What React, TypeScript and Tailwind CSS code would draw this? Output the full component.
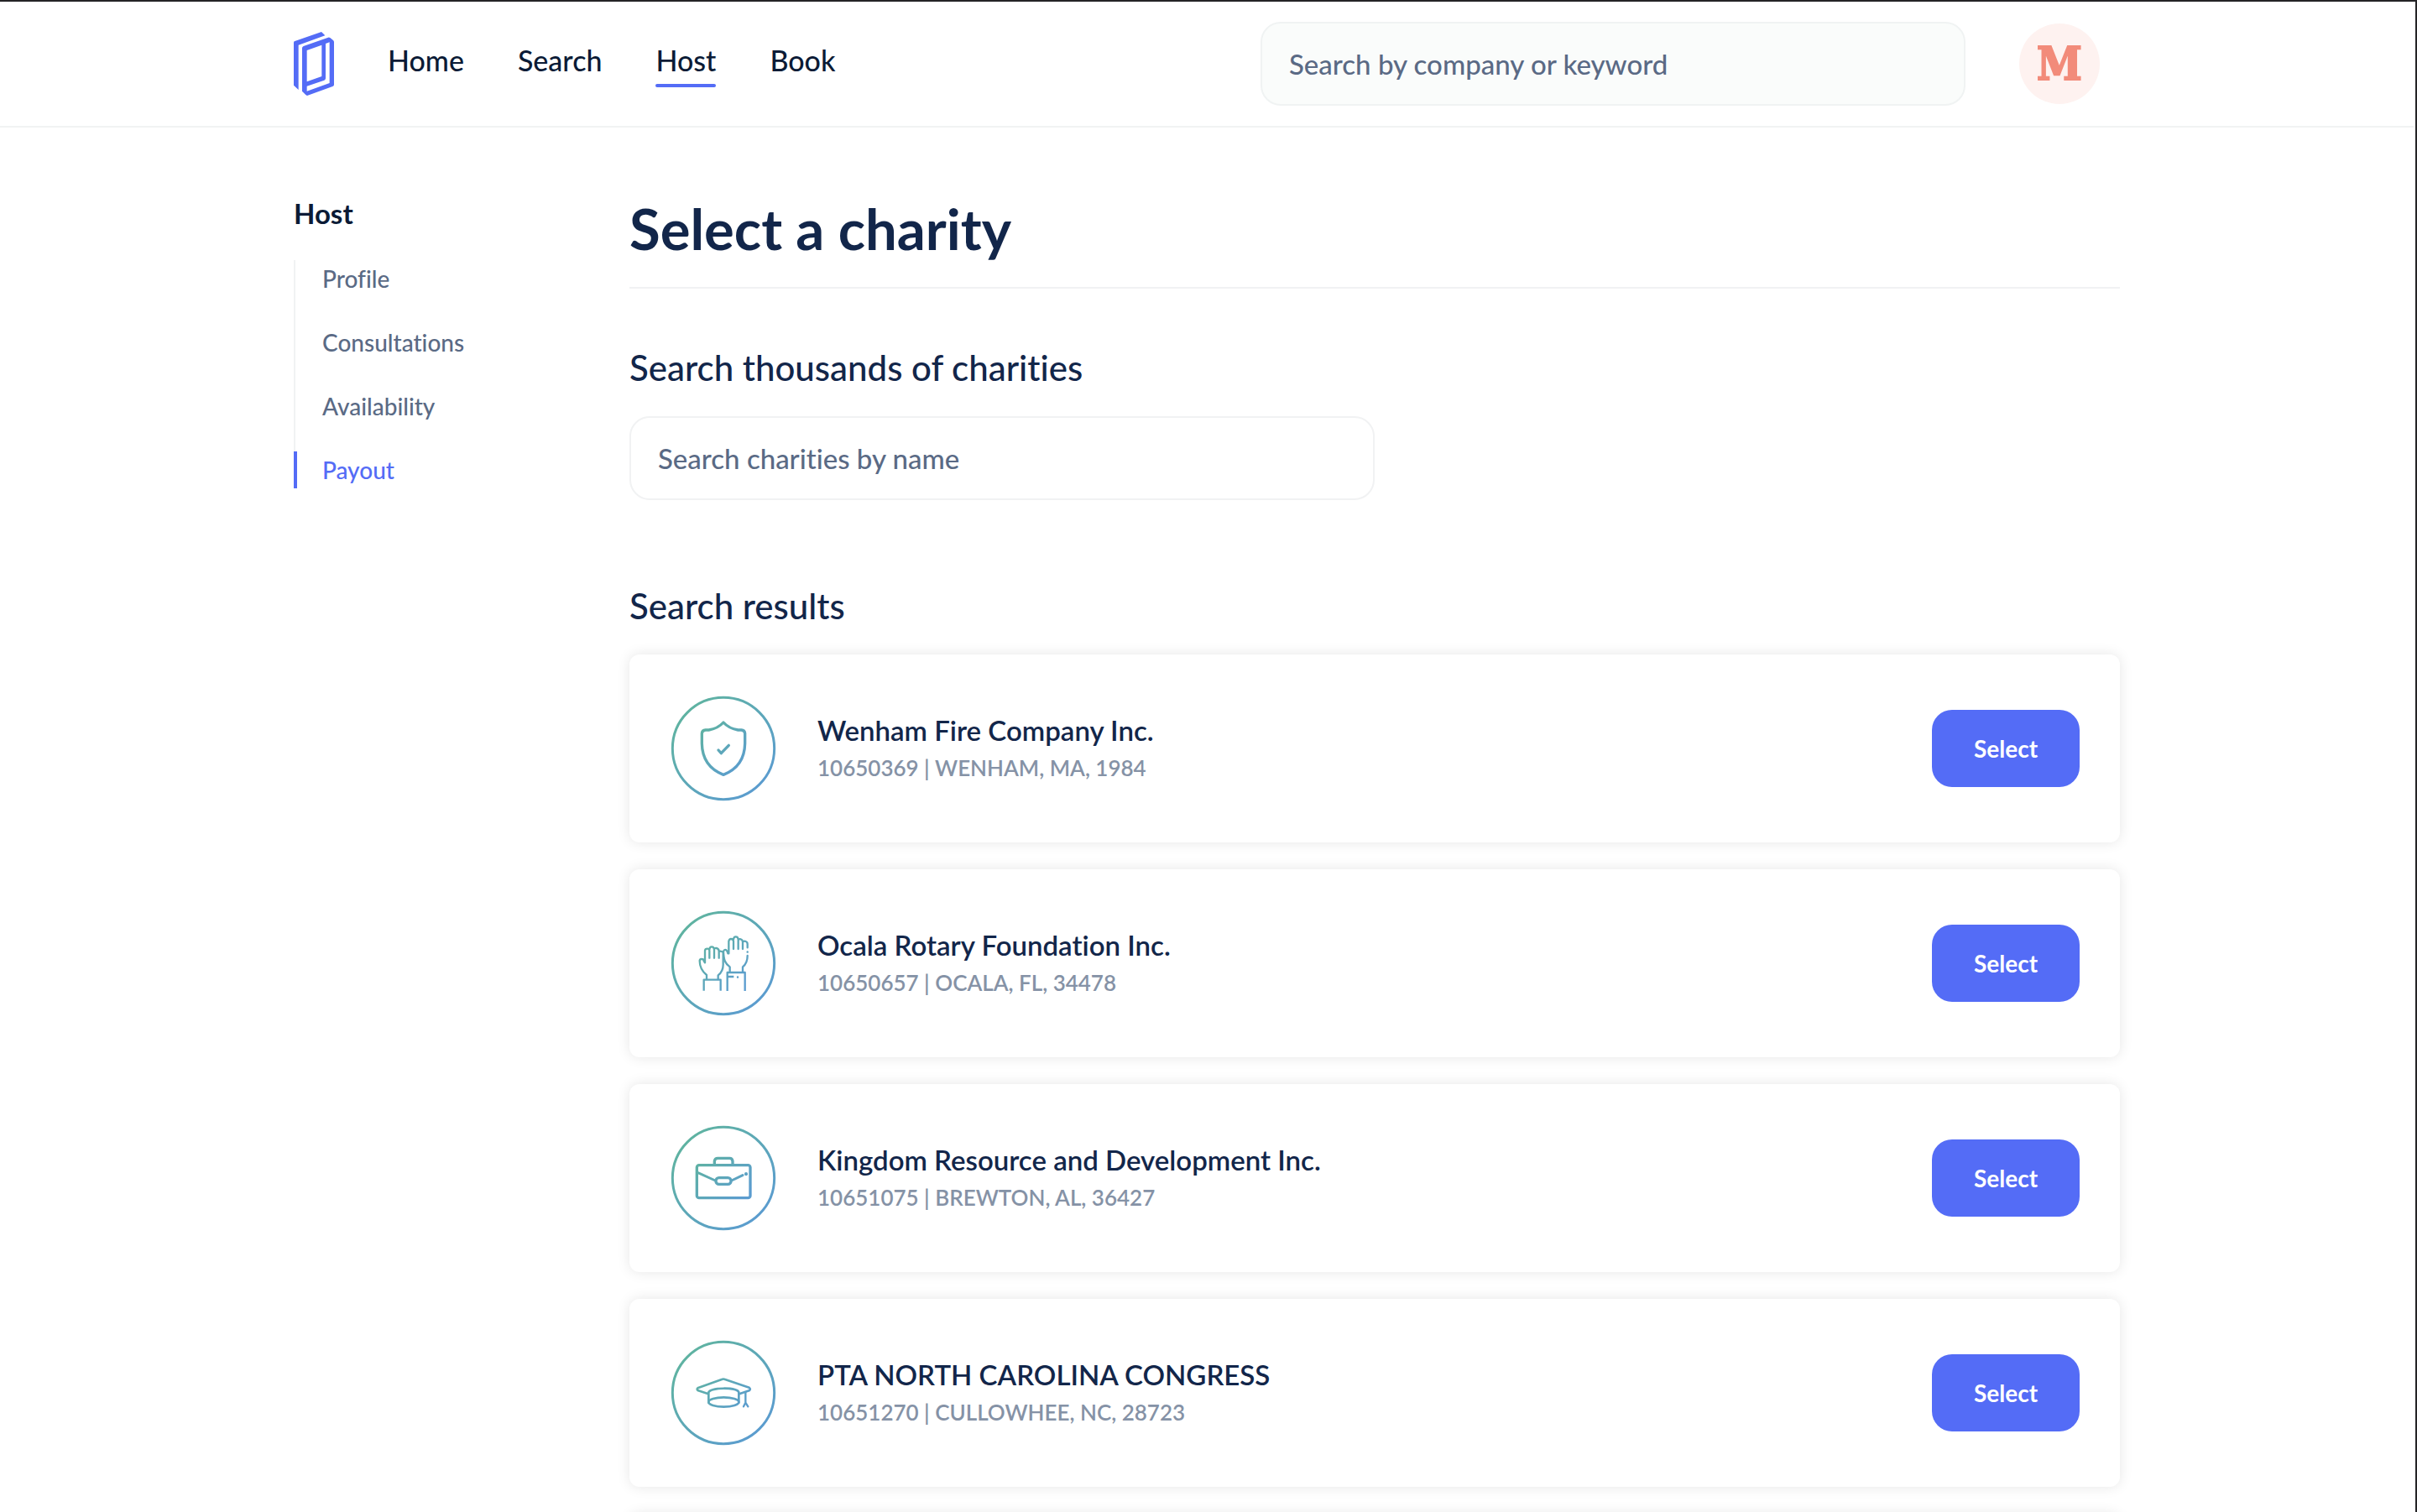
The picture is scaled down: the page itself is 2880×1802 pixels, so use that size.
import type { ReactNode } from 'react';

const navLinks = [
  { label: 'Home', active: false },
  { label: 'Search', active: false },
  { label: 'Host', active: true },
  { label: 'Book', active: false },
];

const sideLinks = [
  { label: 'Profile', active: false },
  { label: 'Consultations', active: false },
  { label: 'Availability', active: false },
  { label: 'Payout', active: true },
];

function Logo() {
  return (
    <svg width="48" height="76" viewBox="30 24 144 228" fill="#546cf6" aria-hidden="true">
      <path d="M30 62 Q30 58 34 57 L129 24 L142 37 L47 71 V231 L30 215 Z" />
      <path
        fillRule="evenodd"
        d="M60 82 Q60 77 65 75 L153 44 Q157 43 160 45 L171 54 Q174 57 174 61 V213 Q174 217 169 219 L78 252 Q75 251 72 248 L60 236 Z M77 90 V202 L130 183 V71 Z M144 66 V190 Q144 195 139 197 L77 218 V236 L158 207 V61 Z"
      />
    </svg>
  );
}

function IconCircle({ id, dy, width, children }: { id: string; dy: number; width: number; children: ReactNode }) {
  return (
    <svg className="shrink-0 overflow-visible" width="124" height="124" viewBox="0 0 372 372" fill="none" aria-hidden="true">
      <defs>
        <linearGradient id={`${id}-ring`} gradientUnits="userSpaceOnUse" x1="50" y1="50" x2="322" y2="322">
          <stop offset="0" stopColor="#5fb3a1" />
          <stop offset="1" stopColor="#5b9ccf" />
        </linearGradient>
        <linearGradient id={`${id}-icon`} gradientUnits="userSpaceOnUse" x1="165" y1="165" x2="320" y2="320">
          <stop offset="0" stopColor="#5fb3a1" />
          <stop offset="1" stopColor="#5b9ccf" />
        </linearGradient>
      </defs>
      <circle cx="186" cy="186" r="182" stroke={`url(#${id}-ring)`} strokeWidth="9" />
      <g
        transform={`translate(-60 ${-dy})`}
        stroke={`url(#${id}-icon)`}
        strokeWidth={width}
        strokeLinecap="round"
        strokeLinejoin="round"
      >
        {children}
      </g>
    </svg>
  );
}

const shield = (
  <IconCircle id="shield" dy={60} width={10}>
    <path d="M246 153 C236 164 218 176 194 180 L182 180 Q170 181 169 192 L169 228 C170 285 200 322 246 340 C292 322 322 285 323 228 L323 192 Q322 181 310 180 L298 180 C274 176 256 164 246 153 Z" />
    <path d="M228 252 L238 263 L265 235" />
  </IconCircle>
);

const hands = (
  <IconCircle id="hands" dy={63} width={7}>
    <path d="M176 347 V308 H236 V347" strokeLinecap="butt" />
    <path d="M186 306 V291 C170 278 161 262 161 240 Q162 233 169 234 Q176 234 176 241 L180 247 V204 Q181 197 188 197 Q196 197 196 204 V230 M196 200 Q197 190 204 190 Q212 190 213 200 V230 M213 198 Q215 194 221 195 Q230 197 230 206 V230 M230 208 Q236 203 245 210 V254 C245 272 240 282 227 292 V306" />
    <path d="M260 348 V282 H323 V348 M262 297 H283" strokeLinecap="butt" />
    <path d="M269 279 V262 C252 250 247 238 246 206 Q249 199 255 201 Q260 204 262 214 L265 214 V170 Q267 162 273 162 Q281 162 282 170 V198 M282 164 Q283 154 290 154 Q298 154 299 164 V198 M299 166 Q302 161 308 163 Q315 165 315 174 V198 M315 173 Q320 168 326 171 Q332 173 332 181 V193 M332 222 C332 242 328 252 315 262 V279" />
    <path d="M332 208 V209 M297 298 V299" />
  </IconCircle>
);

const briefcase = (
  <IconCircle id="briefcase" dy={66} width={10}>
    <rect x="151" y="206" width="191" height="117" rx="8" />
    <path d="M214 204 V192 Q215 181 226 181 H268 Q278 181 279 192 V204" />
    <rect x="219" y="251" width="54" height="23" rx="11" />
    <path d="M155 233 L217 261 M275 261 L315 242" strokeWidth="9" />
    <path d="M327 237 V238" strokeWidth="12" />
  </IconCircle>
);

const gradCap = (
  <IconCircle id="cap" dy={69} width={8}>
    <path d="M190 258 L156 247 Q148 242 156 237 L240 207 Q246 204 252 207 L338 236 Q345 242 338 247 L303 259" />
    <path d="M193 290 V253 C200 235 294 234 301 253 V290" />
    <ellipse cx="247" cy="288" rx="54" ry="17" />
    <path d="M325 253 V290 L318 304 M325 290 L334 304" strokeWidth="7" />
  </IconCircle>
);

const charities = [
  { icon: shield, name: 'Wenham Fire Company Inc.', detail: '10650369 | WENHAM, MA, 1984' },
  { icon: hands, name: 'Ocala Rotary Foundation Inc.', detail: '10650657 | OCALA, FL, 34478' },
  { icon: briefcase, name: 'Kingdom Resource and Development Inc.', detail: '10651075 | BREWTON, AL, 36427' },
  { icon: gradCap, name: 'PTA NORTH CAROLINA CONGRESS', detail: '10651270 | CULLOWHEE, NC, 28723' },
];

function Header() {
  return (
    <header className="border-b-2 border-[#f1f3f3]">
      <div className="mx-auto flex h-[148px] max-w-[2176px] items-center pr-6">
        <a href="#home" aria-label="Homepage">
          <Logo />
        </a>
        <nav className="ml-16 flex gap-16">
          {navLinks.map((link) => (
            <a
              key={link.label}
              href={`#${link.label.toLowerCase()}`}
              className="flex flex-col gap-1 text-[34px] leading-[48px] font-medium text-[#0b1b36]"
            >
              {link.label}
              <span className={link.active ? 'h-1 rounded-full bg-[#546cf6]' : 'h-1'} />
            </a>
          ))}
        </nav>
        <input
          type="search"
          aria-label="Search by company or keyword"
          placeholder="Search by company or keyword"
          className="ml-auto h-[100px] w-[840px] rounded-3xl border-2 border-[#f0f3f3] bg-[#fafcfb] px-8 text-[33px] font-medium text-[#12264a] placeholder:text-[#5a6a85]"
        />
        <button
          type="button"
          aria-label="Account"
          className="ml-16 flex size-24 items-center justify-center rounded-full bg-[#fef2f0] font-['DejaVu_Serif_Condensed','DejaVu_Serif',serif] text-[54px] leading-none font-bold text-[#f28b7a] [-webkit-text-stroke:2px_#f28b7a]"
        >
          M
        </button>
      </div>
    </header>
  );
}

function Sidebar() {
  return (
    <aside>
      <h2 className="text-[33px] leading-[44px] font-bold text-[#0b1b36]">Host</h2>
      <ul className="mt-[34px] flex flex-col gap-8 border-l-2 border-[#f1f2f3]">
        {sideLinks.map((link) => (
          <li key={link.label} className="relative pl-8 text-[28px] leading-[44px] font-medium">
            {link.active && <span className="absolute inset-y-0 -left-0.5 w-1 bg-[#546cf6]" />}
            <a href={`#${link.label.toLowerCase()}`} className={link.active ? 'text-[#546cf6]' : 'text-[#5a6a85]'}>
              {link.label}
            </a>
          </li>
        ))}
      </ul>
    </aside>
  );
}

export default function App() {
  return (
    <div className="h-screen overflow-hidden border-t-2 border-r-2 border-[#242326] bg-white pr-0.5 font-[Lato,sans-serif] text-[#12264a] [font-variant-ligatures:none]">
      <Header />
      <div className="mx-auto grid max-w-[2176px] grid-cols-[400px_1fr] pt-20">
        <Sidebar />
        <main>
          <h1 className="border-b-2 border-[#f1f2f3] pb-[30px] text-[67px] leading-[80px] font-bold">Select a charity</h1>
          <label htmlFor="charity-search" className="mt-[70px] block text-[42px] leading-[48px] font-medium">
            Search thousands of charities
          </label>
          <input
            id="charity-search"
            type="search"
            placeholder="Search charities by name"
            className="mt-[34px] block h-[100px] w-1/2 rounded-3xl border-2 border-[#f1f2f3] px-8 text-[33px] font-medium placeholder:text-[#5a6a85]"
          />
          <h2 className="mt-[102px] text-[42px] leading-[48px] font-medium">Search results</h2>
          <ul className="mt-[34px] flex flex-col gap-8">
            {charities.map((charity) => (
              <li
                key={charity.name}
                className="flex h-[224px] items-center gap-[50px] rounded-xl bg-white pr-12 pl-[50px] shadow-[0_0_16px_rgba(0,0,0,0.1)]"
              >
                {charity.icon}
                <div className="flex-1">
                  <h3 className="text-[33px] leading-[46px] font-semibold">{charity.name}</h3>
                  <p className="text-[26px] leading-[44px] font-semibold text-[#8592a6]">{charity.detail}</p>
                </div>
                <button
                  type="button"
                  className="h-[92px] w-[176px] rounded-3xl bg-[#546cf6] text-[28px] font-bold text-white"
                >
                  Select
                </button>
              </li>
            ))}
            <li aria-hidden="true" className="h-[224px] rounded-xl bg-white shadow-[0_0_16px_rgba(0,0,0,0.1)]" />
          </ul>
        </main>
      </div>
    </div>
  );
}
